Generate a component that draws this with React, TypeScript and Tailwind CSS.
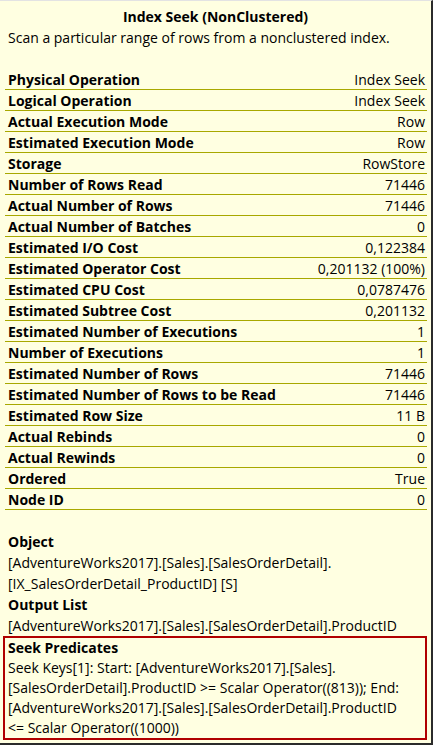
import React from 'react';

type Row = { label: string; value: string };

const rows: Row[] = [
  { label: 'Physical Operation', value: 'Index Seek' },
  { label: 'Logical Operation', value: 'Index Seek' },
  { label: 'Actual Execution Mode', value: 'Row' },
  { label: 'Estimated Execution Mode', value: 'Row' },
  { label: 'Storage', value: 'RowStore' },
  { label: 'Number of Rows Read', value: '71446' },
  { label: 'Actual Number of Rows', value: '71446' },
  { label: 'Actual Number of Batches', value: '0' },
  { label: 'Estimated I/O Cost', value: '0,122384' },
  { label: 'Estimated Operator Cost', value: '0,201132 (100%)' },
  { label: 'Estimated CPU Cost', value: '0,0787476' },
  { label: 'Estimated Subtree Cost', value: '0,201132' },
  { label: 'Estimated Number of Executions', value: '1' },
  { label: 'Number of Executions', value: '1' },
  { label: 'Estimated Number of Rows', value: '71446' },
  { label: 'Estimated Number of Rows to be Read', value: '71446' },
  { label: 'Estimated Row Size', value: '11 B' },
  { label: 'Actual Rebinds', value: '0' },
  { label: 'Actual Rewinds', value: '0' },
  { label: 'Ordered', value: 'True' },
  { label: 'Node ID', value: '0' },
];

export default function App() {
  return (
    <div
      className="w-[433px] h-[745px] bg-[#ffffe1] border-t border-t-[#e3e3e3] border-r-2 border-b-2 border-[#2b2b2b] text-black text-[14px] overflow-hidden"
      style={{ fontFamily: '"Open Sans", "Noto Sans", sans-serif' }}
    >
      {/* Header */}
      <div className="pt-[5px] px-[8px]">
        <div className="h-[21px] leading-[21px] text-center font-bold">Index Seek (NonClustered)</div>
        <div className="h-[21px] leading-[21px]">Scan a particular range of rows from a nonclustered index.</div>
      </div>

      {/* Properties */}
      <div className="mt-[21px] ml-[5px] mr-[4px]">
        {rows.map((r) => (
          <div
            key={r.label}
            className="flex justify-between items-center h-[21px] border-b border-[#a8a800] pl-[3px] pr-[2px]"
          >
            <span className="font-bold">{r.label}</span>
            <span>{r.value}</span>
          </div>
        ))}
      </div>

      {/* Object / Output */}
      <div className="mt-[21px] px-[8px] leading-[21px]">
        <div className="font-bold">Object</div>
        <div>[AdventureWorks2017].[Sales].[SalesOrderDetail].</div>
        <div>[IX_SalesOrderDetail_ProductID] [S]</div>
        <div className="font-bold">Output List</div>
        <div>[AdventureWorks2017].[Sales].[SalesOrderDetail].ProductID</div>
      </div>

      {/* Seek predicates */}
      <div className="ml-[3px] mr-[4px] border-2 border-[#b00000] px-[3px] leading-[20px]">
        <div className="font-bold">Seek Predicates</div>
        <div>Seek Keys[1]: Start: [AdventureWorks2017].[Sales].</div>
        <div>[SalesOrderDetail].ProductID &gt;= Scalar Operator((813)); End:</div>
        <div>[AdventureWorks2017].[Sales].[SalesOrderDetail].ProductID</div>
        <div>&lt;= Scalar Operator((1000))</div>
      </div>
    </div>
  );
}
